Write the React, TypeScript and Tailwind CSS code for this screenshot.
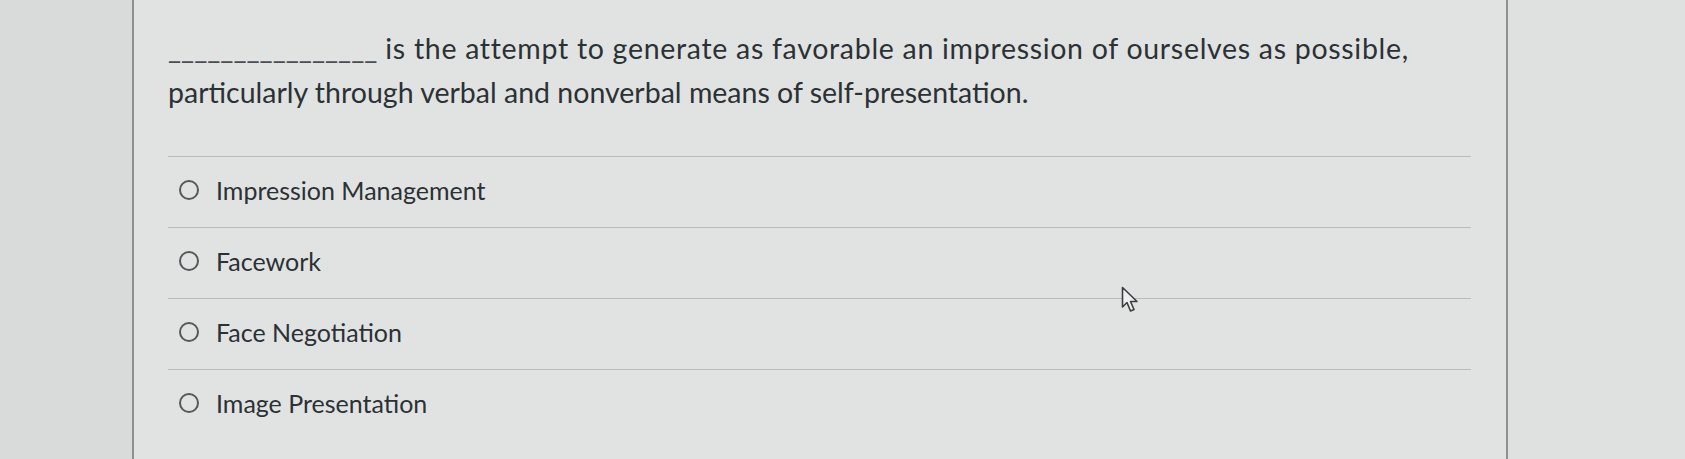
import React from "react";

const options = ["Impression Management", "Facework", "Face Negotiation", "Image Presentation"];

export default function App() {
  return (
    <div
      className="relative flex h-[459px] w-[1685px] overflow-hidden bg-[#dcdedd] text-[#2c3135]"
      style={{ fontFamily: "Lato, 'Open Sans', sans-serif" }}
    >
      <div className="w-[132px] shrink-0 bg-[#d9dbda]" />
      <div className="flex w-[1376px] shrink-0 flex-col border-x-2 border-[#8e9190] bg-[#e1e3e2] pl-[34px] pr-[35px] pt-[26px]">
        <div className="whitespace-nowrap text-[28.5px] leading-[44px]">
          <p className="tracking-[0.7px]">
            <span className="tracking-normal text-[#4a4e52]">________________</span> is the attempt to generate as favorable an impression of ourselves as possible,
          </p>
          <p>particularly through verbal and nonverbal means of self-presentation.</p>
        </div>
        <div className="mt-[42px] flex flex-col">
          {options.map((o) => (
            <div key={o} className="flex h-[71px] items-center border-t border-[#b9bcbb] pb-[4px] pl-[11px]">
              <span className="h-[20px] w-[20px] shrink-0 rounded-full border-2 border-[#55595c]" />
              <span className="ml-[17px] text-[25px] leading-none">{o}</span>
            </div>
          ))}
        </div>
      </div>
      <div className="flex-1 bg-[#dfe1e0]" />
      <svg
        className="absolute left-[1121px] top-[286px]"
        width="20"
        height="28"
        viewBox="0 0 20 28"
      >
        <path
          d="M1.5 1.5 L1.5 21 L6 16.5 L9.5 25 L13 23.5 L9.5 15.5 L16 15.5 Z"
          fill="#eef0ef"
          stroke="#3b3f42"
          strokeWidth="1.6"
          strokeLinejoin="round"
        />
      </svg>
    </div>
  );
}
